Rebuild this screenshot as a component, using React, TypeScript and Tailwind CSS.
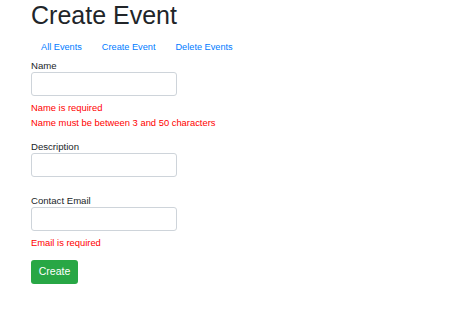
import { useState } from "react";

const font = { fontFamily: '"Liberation Sans", Arial, sans-serif' };

export default function App() {
  const [name, setName] = useState("");
  const [description, setDescription] = useState("");
  const [email, setEmail] = useState("");

  return (
    <div className="min-h-[314px] w-[474px] bg-white pl-[31px] text-[#212529]" style={font}>
      <h1 className="mb-[5px] text-[25px] font-medium leading-[30px]">Create Event</h1>

      <nav className="flex">
        <a href="#" className="px-[10px] py-[5px] text-[9.2px] leading-[15px] text-[#007bff]">All Events</a>
        <a href="#" className="px-[10px] py-[5px] text-[9.2px] leading-[15px] text-[#007bff]">Create Event</a>
        <a href="#" className="px-[10px] py-[5px] text-[9.2px] leading-[15px] text-[#007bff]">Delete Events</a>
      </nav>

      <form onSubmit={(e) => e.preventDefault()}>
        <div className="mb-[11px]">
          <label className="block text-[9.6px] leading-[12px]">Name</label>
          <input
            value={name}
            onChange={(e) => setName(e.target.value)}
            className="block h-[24px] w-[146px] rounded-[3px] border border-[#ced4da] px-[7px] text-[9.6px] outline-none"
          />
          <div className="mt-[4px] text-[9.4px] leading-[15px] text-[#ff0000]">
            <div>Name is required</div>
            <div>Name must be between 3 and 50 characters</div>
          </div>
        </div>

        <div className="mb-[18px]">
          <label className="block text-[9.6px] leading-[12px]">Description</label>
          <input
            value={description}
            onChange={(e) => setDescription(e.target.value)}
            className="block h-[24px] w-[146px] rounded-[3px] border border-[#ced4da] px-[7px] text-[9.6px] outline-none"
          />
        </div>

        <div>
          <label className="block text-[9.6px] leading-[12px]">Contact Email</label>
          <input
            value={email}
            onChange={(e) => setEmail(e.target.value)}
            className="block h-[24px] w-[146px] rounded-[3px] border border-[#ced4da] px-[7px] text-[9.6px] outline-none"
          />
          <div className="mt-[4px] text-[9.4px] leading-[15px] text-[#ff0000]">Email is required</div>
        </div>

        <button
          type="submit"
          className="mt-[10px] h-[24px] w-[47px] rounded-[3px] bg-[#28a745] text-[10.5px] text-white"
        >
          Create
        </button>
      </form>
    </div>
  );
}
